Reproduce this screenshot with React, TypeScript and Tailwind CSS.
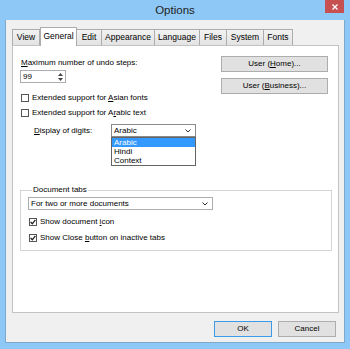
import React from "react";

const F = "font-['Liberation_Sans',_Arial,_sans-serif]";

function Chevron() {
  return (
    <svg width="6" height="4" viewBox="0 0 6 4" className="shrink-0">
      <path d="M0.5 0.5 L3 3 L5.5 0.5" fill="none" stroke="#333" strokeWidth="1" />
    </svg>
  );
}

function Check({ checked, children }: { checked?: boolean; children: React.ReactNode }) {
  return (
    <div className="flex items-center h-[12px]">
      <div className="w-[8px] h-[8px] border border-[#555] bg-white flex items-center justify-center shrink-0">
        {checked && (
          <svg width="6" height="6" viewBox="0 0 6 6">
            <path d="M0.6 3 L2.3 4.8 L5.4 0.8" fill="none" stroke="#222" strokeWidth="1.3" />
          </svg>
        )}
      </div>
      <span className="ml-[3px] text-[8px] leading-[10px] text-black whitespace-nowrap">{children}</span>
    </div>
  );
}

function Tab({ label, w, selected, first }: { label: string; w: string; selected?: boolean; first?: boolean }) {
  if (selected) {
    return (
      <div
        className={`${w} h-[19px] -mb-[1px] relative z-10 bg-white border-t border-l border-r border-[#acacac] flex items-center justify-center text-[8.5px] text-black pb-[1px]`}
      >
        {label}
      </div>
    );
  }
  return (
    <div
      className={`${w} h-[16px] bg-gradient-to-b from-[#f2f2f2] to-[#e3e3e3] border-t border-r ${first ? "border-l" : ""} border-[#acacac] flex items-center justify-center text-[8.5px] text-black`}
    >
      {label}
    </div>
  );
}

export default function App() {
  return (
    <div className={`${F} w-[350px] h-[349px] bg-[#8ec8f6] flex flex-col overflow-hidden`}>
      {/* Title bar */}
      <div className="h-[20px] grid grid-cols-[1fr_auto_1fr] shrink-0">
        <div />
        <div className="text-[11.5px] leading-[20px] text-[#222]">Options</div>
        <div className="flex justify-end items-start pr-[6px]">
          <div className="w-[19px] h-[13px] bg-[#c75050] flex items-center justify-center">
            <svg width="6" height="6" viewBox="0 0 6 6">
              <path d="M0.5 0.5 L5.5 5.5 M5.5 0.5 L0.5 5.5" stroke="white" strokeWidth="1.3" />
            </svg>
          </div>
        </div>
      </div>

      {/* Client area */}
      <div className="mx-[5px] mb-[7px] flex-1 bg-[#f0f0f0] flex flex-col pt-[7px] pl-[6px] pr-[5px] pb-[5px] border border-[#7fa9cc] border-t-0">
        {/* Tab strip */}
        <div className="h-[18px] flex items-end shrink-0">
          <Tab label="View" w="w-[28px]" first />
          <Tab label="General" w="w-[37px]" selected />
          <Tab label="Edit" w="w-[25px]" />
          <Tab label="Appearance" w="w-[53px]" />
          <Tab label="Language" w="w-[45px]" />
          <Tab label="Files" w="w-[27px]" />
          <Tab label="System" w="w-[37px]" />
          <Tab label="Fonts" w="w-[29px]" />
        </div>

        {/* Pane */}
        <div className="h-[268px] shrink-0 bg-white border border-[#c3c3c3] pt-[10px] pl-[8px] pr-[10px] text-black">
          <div className="flex justify-between">
            {/* Left column */}
            <div className="pt-[2px] flex flex-col">
              <div className="h-[10px] leading-[10px] text-[8px]">
                <span className="underline">M</span>aximum number of undo steps:
              </div>
              <div className="mt-[2px] -ml-[1px] w-[46px] h-[13px] border border-[#abadb3] flex">
                <div className="flex-1 text-[8px] leading-[11px] pl-[2px]">99</div>
                <div className="w-[9px] flex flex-col items-center justify-center gap-[2px]">
                  <svg width="5" height="3" viewBox="0 0 5 3">
                    <path d="M0 3 L2.5 0 L5 3 Z" fill="#444" />
                  </svg>
                  <svg width="5" height="3" viewBox="0 0 5 3">
                    <path d="M0 0 L2.5 3 L5 0 Z" fill="#444" />
                  </svg>
                </div>
              </div>
              <div className="mt-[9px]">
                <Check>
                  Extended support for <span className="underline">A</span>sian fonts
                </Check>
              </div>
              <div className="mt-[3px]">
                <Check>
                  Extended support for A<span className="underline">r</span>abic text
                </Check>
              </div>
              <div className="mt-[5px] flex items-center h-[13px] ml-[13px]">
                <div className="w-[77px] text-[8px] leading-[10px]">
                  <span className="underline">D</span>isplay of digits:
                </div>
                <div className="relative w-[85px] h-[13px] border border-[#8a8a8a] bg-white flex items-center justify-between pl-[2px] pr-[4px]">
                  <span className="text-[8px] leading-[10px]">Arabic</span>
                  <Chevron />
                  {/* open list */}
                  <div className="absolute left-[-1px] top-[12px] w-[85px] border border-[#646464] bg-white z-20 flex flex-col">
                    <div className="h-[9px] bg-[#3399ff] text-white text-[8px] leading-[9px] pl-[2px]">Arabic</div>
                    <div className="h-[9px] text-[8px] leading-[9px] pl-[2px]">Hindi</div>
                    <div className="h-[9px] text-[8px] leading-[9px] pl-[2px]">Context</div>
                  </div>
                </div>
              </div>
            </div>

            {/* Right column */}
            <div className="flex flex-col gap-[6px]">
              <div className="w-[107px] h-[16px] bg-[#e1e1e1] border border-[#adadad] flex items-center justify-center text-[8px]">
                User (<span className="underline">H</span>ome)...
              </div>
              <div className="w-[107px] h-[16px] bg-[#e1e1e1] border border-[#adadad] flex items-center justify-center text-[8px]">
                User (<span className="underline">B</span>usiness)...
              </div>
            </div>
          </div>

          {/* Group box */}
          <fieldset className="mt-[48px] -ml-[1px] w-[312px] border border-[#d5d5d5] pb-[6px] pl-[7px]">
            <legend className="ml-[4px] px-[1px] text-[8px] leading-[10px]">Document tabs</legend>
            <div className="mt-[2px] w-[185px] h-[13px] border border-[#abadb3] bg-white flex items-center justify-between pl-[2px] pr-[4px]">
              <span className="text-[8px] leading-[10px]">For two or more documents</span>
              <Chevron />
            </div>
            <div className="mt-[6px] ml-[1px]">
              <Check checked>
                Show document <span className="underline">i</span>con
              </Check>
            </div>
            <div className="mt-[4px] ml-[1px]">
              <Check checked>
                Show Close <span className="underline">b</span>utton on inactive tabs
              </Check>
            </div>
          </fieldset>
        </div>

        {/* Buttons */}
        <div className="mt-[8px] flex justify-end gap-[6px] mr-[3px]">
          <div className="w-[58px] h-[16px] bg-[#e1e1e1] border border-[#3c9ae8] flex items-center justify-center text-[8px] text-black">
            OK
          </div>
          <div className="w-[58px] h-[16px] bg-[#e1e1e1] border border-[#adadad] flex items-center justify-center text-[8px] text-black">
            Cancel
          </div>
        </div>
      </div>
    </div>
  );
}
